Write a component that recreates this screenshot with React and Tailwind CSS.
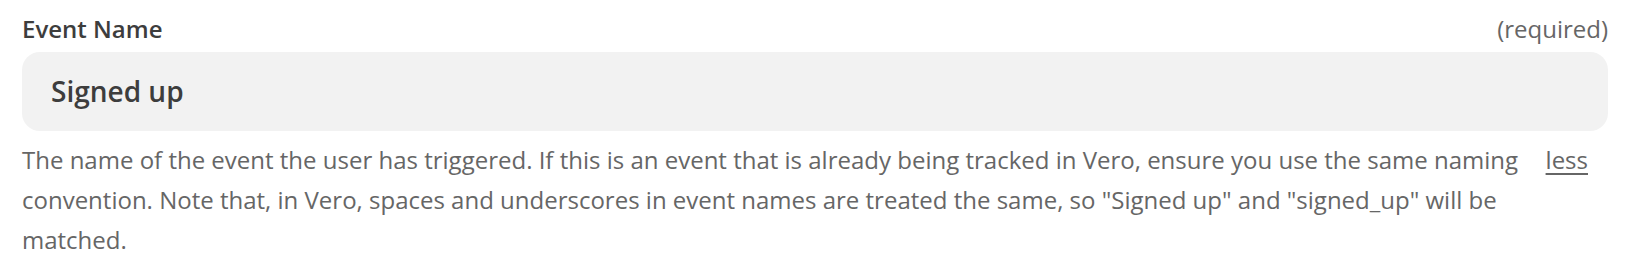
const App = () => {
  return (
    <div
      className="min-h-screen w-full bg-white pt-[13px] pl-[22px]"
      style={{ fontFamily: '"Open Sans", "Noto Sans", sans-serif' }}
    >
      <div className="w-[1586px]">
        <div className="flex items-baseline justify-between leading-[32px]">
          <label className="text-[24px] font-semibold text-[#3d3d3d]">
            Event Name
          </label>
          <span className="text-[24px] text-[#666666]">(required)</span>
        </div>
        <div className="mt-[7px] flex h-[79px] items-center rounded-[18px] bg-[#f2f2f2] pb-[2px] pl-[29px]">
          <span className="text-[28px] font-semibold text-[#3d3d3d]">
            Signed up
          </span>
        </div>
        <div className="mt-[9px] flex items-start text-[24px] leading-[40px] text-[#666666]">
          <p className="flex-1 pr-[24px]">
            The name of the event the user has triggered. If this is an event
            that is already being tracked in Vero, ensure you use the same
            naming convention. Note that, in Vero, spaces and underscores in
            event names are treated the same, so "Signed up" and "signed_up"
            will be matched.
          </p>
          <a
            href="#"
            className="mr-[20px] shrink-0 text-[#666666] underline underline-offset-[4px]"
          >
            less
          </a>
        </div>
      </div>
    </div>
  );
};

export default App;
